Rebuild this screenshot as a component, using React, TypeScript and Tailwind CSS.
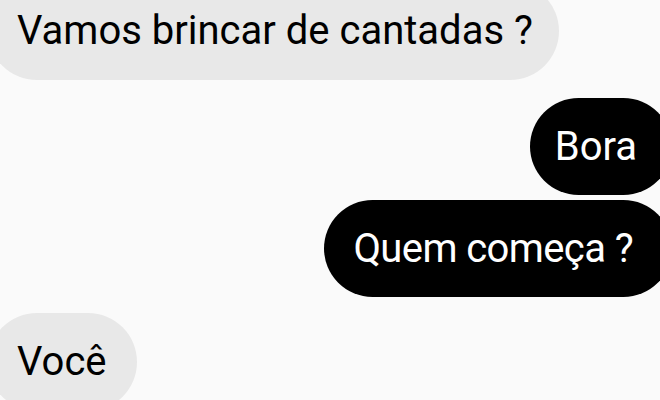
export default function App() {
  return (
    <main
      className="h-[400px] w-[660px] overflow-hidden bg-[#fafafa]"
      style={{ fontFamily: "Roboto, 'Liberation Sans', sans-serif" }}
    >
      <div className="mt-[-18px] flex flex-col">
        {/* incoming */}
        <div className="flex justify-start">
          <div className="ml-[-12px] flex h-[98px] items-center rounded-full bg-[#e8e8e8] pl-[29px] pr-[26px] text-[40px] text-black">
            Vamos brincar de cantadas ?
          </div>
        </div>

        {/* outgoing */}
        <div className="mt-[18px] flex flex-col items-end gap-[5px]">
          <div className="mr-[-12px] flex h-[97px] items-center rounded-full bg-black pl-[25px] pr-[35px] text-[40px] text-white">
            Bora
          </div>
          <div className="mr-[-12px] flex h-[97px] items-center rounded-full bg-black pl-[29px] pr-[39px] text-[40px] tracking-[-0.6px] text-white">
            Quem começa ?
          </div>
        </div>

        {/* incoming */}
        <div className="mt-[16px] flex justify-start">
          <div className="ml-[-12px] flex h-[98px] items-center rounded-full bg-[#e8e8e8] pl-[29px] pr-[30px] text-[40px] text-black">
            Você
          </div>
        </div>
      </div>
    </main>
  );
}
